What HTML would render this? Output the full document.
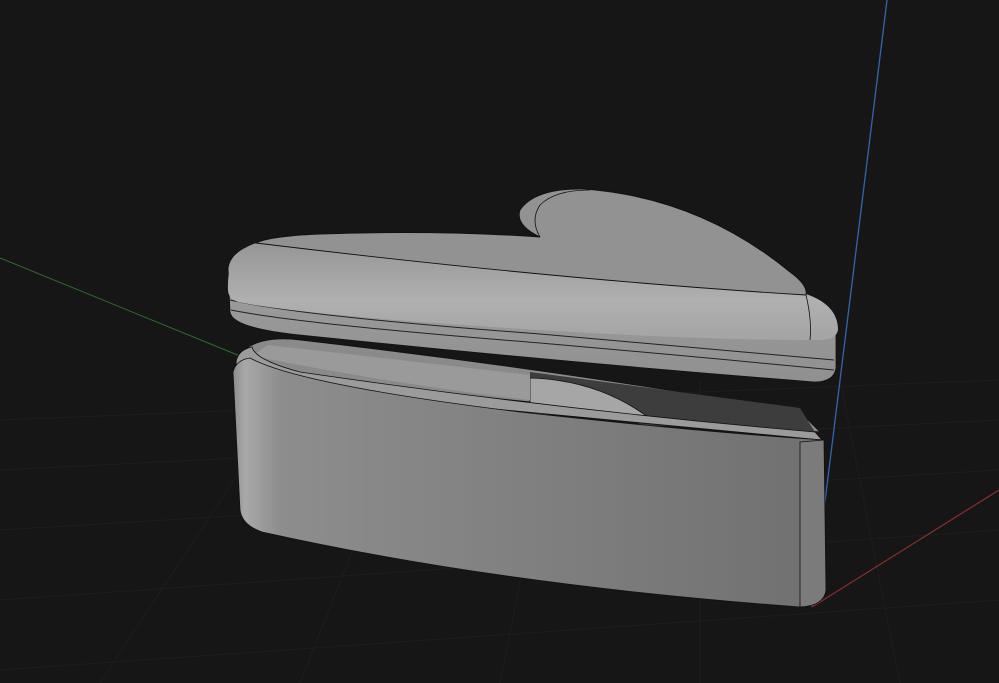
<!DOCTYPE html>
<html><head><meta charset="utf-8"><style>
html,body{margin:0;padding:0;background:#161616;width:999px;height:683px;overflow:hidden}
</style></head><body>
<svg width="999" height="683" viewBox="0 0 999 683" xmlns="http://www.w3.org/2000/svg">
<defs>
<linearGradient id="front" x1="0" x2="1" y1="0" y2="0">
<stop offset="0" stop-color="#8a8a8a"/><stop offset="0.02" stop-color="#a9a9a9"/><stop offset="0.08" stop-color="#8d8d8d"/><stop offset="1" stop-color="#707070"/></linearGradient>
<linearGradient id="lidside" x1="0" x2="0" y1="0" y2="1">
<stop offset="0" stop-color="#a2a2a2"/><stop offset="1" stop-color="#909090"/></linearGradient>
<linearGradient id="bull" x1="0" x2="0" y1="0" y2="1">
<stop offset="0" stop-color="#959595"/><stop offset="0.6" stop-color="#b0b0b0"/><stop offset="1" stop-color="#a4a4a4"/></linearGradient>
</defs>
<rect width="999" height="683" fill="#161616"/>
<g stroke="#1d1d1d" stroke-width="1" fill="none">
<path d="M0 420 L999 380 M0 470 L999 420 M0 530 L999 470 M0 600 L999 530 M0 670 L999 600"/>
<path d="M100 683 L300 380 M300 683 L420 380 M500 683 L560 380 M700 683 L700 380 M900 683 L840 380"/>
</g>
<line x1="0" y1="258" x2="240" y2="356" stroke="#2f6b2f" stroke-width="1"/>
<line x1="887" y1="0" x2="812" y2="607" stroke="#2f66b0" stroke-width="1.3"/>
<line x1="812" y1="607" x2="999" y2="490" stroke="#8a2e2e" stroke-width="1.2"/>
<!-- base inner back -->
<path d="M242 352 Q260 335 300 340 Q560 370 800 412 L820 432 L242 372 Z" fill="#8a8a8a" stroke="#111" stroke-width="0.8"/>
<path d="M530 372 L800 408 L815 432 L640 425 Q600 380 530 378 Z" fill="#3d3d3d"/>
<path d="M530 378 Q600 380 652 420 L530 414 Z" fill="#a6a6a6" stroke="#111" stroke-width="0.8"/>
<path d="M252 356 Q400 385 530 400 L530 375 Q400 360 268 345 Z" fill="#9a9a9a"/>
<!-- base rim -->
<path d="M236 362 Q238 350 252 347 Q255 360 300 372 Q560 410 815 432 L822 440 L240 385 Z" fill="#9b9b9b" stroke="#111" stroke-width="0.8"/>
<!-- base front -->
<path d="M233 372 Q236 360 250 358 Q300 385 520 412 Q700 432 824 440 L826 590 Q824 606 800 607 Q500 585 262 532 Q242 525 240 510 Z" fill="url(#front)" stroke="#111" stroke-width="0.8"/>
<path d="M800 442 L824 440 L826 590 Q824 606 800 607 Z" fill="#7b7b7b" stroke="#111" stroke-width="0.8"/>
<!-- lid side -->
<path d="M228 268 Q232 240 300 236 Q540 232 836 318 L836 368 Q834 382 814 382 Q560 362 300 335 Q232 328 230 312 Z" fill="url(#lidside)" stroke="#111" stroke-width="0.8"/>
<path d="M230 300 Q300 316 540 334 Q700 348 834 360" stroke="#222" fill="none" stroke-width="1"/>
<path d="M231 310 Q300 324 540 343 Q700 357 834 370" stroke="#222" fill="none" stroke-width="1"/>
<!-- bullnose -->
<path d="M228 290 Q226 250 260 242 Q400 238 540 252 Q700 270 806 294 Q838 305 838 330 Q836 340 820 340 Q700 340 540 330 Q300 315 238 302 Q228 298 228 290 Z" fill="url(#bull)"/>
<!-- lid top face -->
<path d="M256 243 Q270 236 320 234 Q440 230 540 237 Q515 225 520 210 Q535 188 585 189 Q700 198 790 272 Q808 285 806 295 Q560 280 256 243 Z" fill="#929292" stroke="#111" stroke-width="0.9"/>
<path d="M540 237 Q530 220 540 205 Q555 190 590 190" fill="none" stroke="#111" stroke-width="0.8"/>
<path d="M806 295 Q812 320 810 340" stroke="#111" fill="none" stroke-width="0.8"/>
</svg>
</body></html>
